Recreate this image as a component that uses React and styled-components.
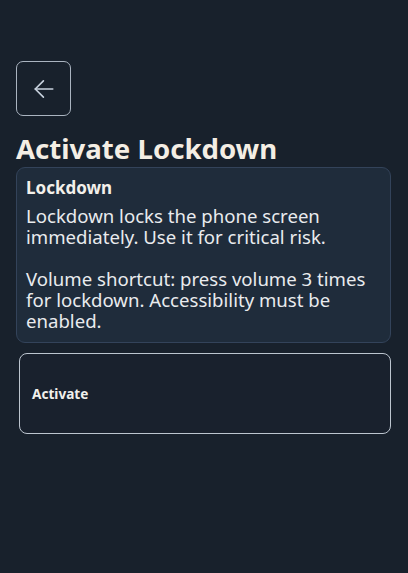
import React from "react";
import styled, { createGlobalStyle } from "styled-components";

const Global = createGlobalStyle`
  html, body { margin: 0; padding: 0; background: #18212c; }
  body { font-family: "Noto Sans", "DejaVu Sans", sans-serif; }
  #root { min-height: 573px; }
`;

const Page = styled.div`
  display: flex;
  flex-direction: column;
  padding: 61px 17px 0 16px;
  background: #18212c;
  min-height: 573px;
  box-sizing: border-box;
`;

const BackButton = styled.button`
  width: 55px;
  height: 55px;
  box-sizing: border-box;
  border: 1.5px solid #aab4c0;
  border-radius: 7px;
  background: transparent;
  display: flex;
  align-items: center;
  justify-content: center;
  padding: 0;
  color: #c8d2de;
`;

const Title = styled.h1`
  margin: 14px 0 0 0;
  font-size: 27.6px;
  line-height: 36px;
  font-weight: 700;
  color: #f4eee4;
`;

const Card = styled.div`
  margin-top: 1px;
  background: #1f2c3b;
  border: 1px solid #33435a;
  border-radius: 9px;
  padding: 9px 10px 11px 9px;
`;

const CardTitle = styled.div`
  font-size: 17px;
  font-weight: 700;
  color: #f3f0ea;
  line-height: 22px;
`;

const CardText = styled.p`
  margin: 6px 0 0 0;
  font-size: 18.6px;
  line-height: 21px;
  color: #e9ebee;
  white-space: pre-line;
`;

const ActionButton = styled.button`
  margin: 10px 0 0 3px;
  height: 81px;
  box-sizing: border-box;
  border: 1.5px solid #bcc5cf;
  border-radius: 8px;
  background: #19212d;
  color: #f1f0ec;
  font-family: inherit;
  font-size: 13.6px;
  font-weight: 700;
  text-align: left;
  padding: 0 12px;
`;

export default function App() {
  return (
    <>
      <Global />
      <Page>
        <BackButton aria-label="Back">
          <svg width="28" height="28" viewBox="0 0 24 24" fill="none" stroke="currentColor" strokeWidth="1.4" strokeLinecap="round" strokeLinejoin="round">
            <path d="M19.5 12H4.5" />
            <path d="M11.5 19l-7-7 7-7" />
          </svg>
        </BackButton>
        <Title>Activate Lockdown</Title>
        <Card>
          <CardTitle>Lockdown</CardTitle>
          <CardText>{"Lockdown locks the phone screen immediately. Use it for critical risk.\n\nVolume shortcut: press volume 3 times for lockdown. Accessibility must be enabled."}</CardText>
        </Card>
        <ActionButton>Activate</ActionButton>
      </Page>
    </>
  );
}
